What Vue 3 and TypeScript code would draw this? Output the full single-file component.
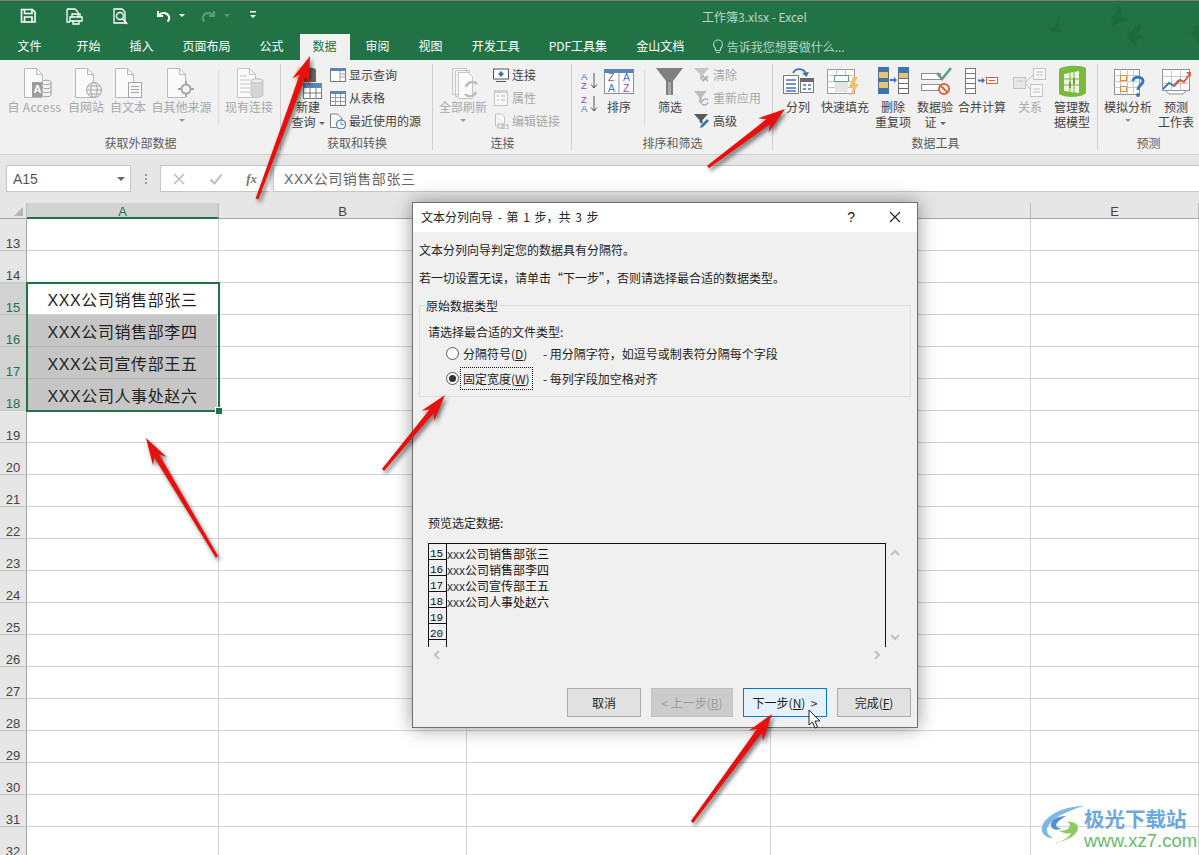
<script setup lang="ts">
const tabs = ['文件', '开始', '插入', '页面布局', '公式', '数据', '审阅', '视图', '开发工具', 'PDF工具集', '金山文档']
const cols = ['A', 'B', 'C', 'D', 'E']
const rows = Array.from({ length: 20 }, (_, i) => i + 13)
const cellText: Record<number, string> = {
  15: 'XXX公司销售部张三',
  16: 'XXX公司销售部李四',
  17: 'XXX公司宣传部王五',
  18: 'XXX公司人事处赵六',
}
const preview = [
  { n: 15, t: '公司销售部张三' },
  { n: 16, t: '公司销售部李四' },
  { n: 17, t: '公司宣传部王五' },
  { n: 18, t: '公司人事处赵六' },
  { n: 19, t: '' },
  { n: 20, t: '' },
]
function arrow(x1: number, y1: number, x2: number, y2: number, w = 1): string {
  const dx = x2 - x1
  const dy = y2 - y1
  const len = Math.hypot(dx, dy)
  const ux = dx / len
  const uy = dy / len
  const nx = -uy
  const ny = ux
  const p = (along: number, off: number) =>
    `${(x1 + ux * along + nx * off * w).toFixed(1)},${(y1 + uy * along + ny * off * w).toFixed(1)}`
  const neck = len - 21
  const barb = len - 27
  return [p(0, -1.4), p(neck, -2.8), p(barb, -8), p(len, 0), p(barb, 8), p(neck, 2.8), p(0, 1.4)].join(' ')
}
const arrows = [
  arrow(257, 199, 310, 56, 1.1),
  arrow(708, 167, 785, 109, 1.1),
  arrow(383, 470, 445, 395),
  arrow(217, 557, 146, 438),
  arrow(692, 822, 772, 714, 1.1),
]
</script>

<template>
  <div class="app">
    <header class="top">
      <div class="title-row">
        <svg class="qat" width="270" height="31" viewBox="0 1 270 31">
          <g fill="none" stroke="#fff" stroke-width="1.6">
            <path d="M21.500 9.500h11l2.500 2.500v10h-13.500z" />
            <path d="M24.500 9.500v4h7.500v-4M24.500 22v-5h7.500v5" />
            <path d="M67 9h8l3 3v5M67 9v13h3" stroke-width="1.300" />
            <path d="M72 14h8v3h-8zM70 17h12v4h-12zM73 21h6v3h-6z" stroke-width="1.300" />
            <path d="M114 9h8l3 3v11h-11z" stroke-width="1.300" />
            <circle cx="120" cy="16" r="3.500" stroke-width="1.400" />
            <path d="M123 19l4 5" stroke-width="1.800" />
            <path d="M158 11v5h5M158.500 15.500c3-4 9-3 10.500 1 .6 2-.4 4-1.500 5" stroke-width="2" />
          </g>
          <path d="M179 14h6l-3 3z" fill="#fff" />
          <g fill="none" stroke="#5f9a7a" stroke-width="2">
            <path d="M214 11v5h-5M213.500 15.500c-3-4-9-3-10.500 1-.6 2 .4 4 1.500 5" />
          </g>
          <path d="M224 14h6l-3 3z" fill="#5f9a7a" />
          <path d="M250 11h6v1.500h-6zM250 15h6l-3 3z" fill="#fff" />
        </svg>
        <span class="doc-title">工作簿3.xlsx - Excel</span>
        <svg class="birds" width="159" height="60" viewBox="0 0 477 180">
          <g fill="#1d6a40">
            <path d="M58 46L50 60 44 80 24 84 40 95 72 96 58 88 58 70z" />
            <path d="M232 14L246 30 246 52 270 60 240 66 212 84 220 60 207 50 224 46z" />
            <path d="M305 73L285 78 276 96 254 100 268 108 266 122 292 140 286 118 314 115 296 102z" />
            <path d="M477 75L462 78 460 96 446 100 460 104 477 138z" />
          </g>
        </svg>
      </div>
      <nav class="tabs">
        <span
          v-for="tab in tabs"
          :key="tab"
          class="tab"
          :class="{ active: tab === '数据', first: tab === '文件' }"
        >{{ tab }}</span>
        <span class="tell">
          <svg width="12" height="15" viewBox="0 0 12 15" fill="none" stroke="#b5d3c1" stroke-width="1.100">
            <path d="M3.500 9.500c-1-1-2-2-2-4a4.500 4.500 0 0 1 9 0c0 2-1 3-2 4v2h-5zM4 13.500h4" />
          </svg>
          告诉我您想要做什么...
        </span>
      </nav>
    </header>

    <section class="ribbon">
      <div class="group g1">
        <div class="body">
          <div class="tool w55 dis">
            <svg width="36" height="36" viewBox="0 0 36 36">
              <path d="M7.500 4.500h12l6 6v23h-18z" fill="#fafafa" stroke="#b9b9b9" />
              <path d="M19.500 4.500v6h6" fill="none" stroke="#b9b9b9" />
              <rect x="15" y="18" width="10" height="15" fill="#9c9c9c" />
              <text x="16.500" y="29" class="svg-a" fill="#fff">A</text>
              <g fill="#f4f4f4" stroke="#9c9c9c">
                <path d="M25 18.500c0-3 9-3 9 0v12c0 3-9 3-9 0z" />
                <path d="M25 18.500c0 3 9 3 9 0M25 22.500c0 3 9 3 9 0M25 26.500c0 3 9 3 9 0" fill="none" />
              </g>
            </svg>
            <span class="access">自 Access</span>
          </div>
          <div class="tool w36 dis">
            <svg width="36" height="36" viewBox="0 0 36 36">
              <path d="M7.500 4.500h12l6 6v23h-18z" fill="#fafafa" stroke="#b9b9b9" />
              <path d="M19.500 4.500v6h6" fill="none" stroke="#b9b9b9" />
              <g fill="#f4f4f4" stroke="#a5a5a5">
                <circle cx="26" cy="26" r="7.500" />
                <ellipse cx="26" cy="26" rx="3.200" ry="7.500" fill="none" />
                <path d="M18.500 26h15M20 22h12M20 30h12" fill="none" />
              </g>
            </svg>
            <span>自网站</span>
          </div>
          <div class="tool w36 dis">
            <svg width="36" height="36" viewBox="0 0 36 36">
              <path d="M5.500 4.500h12l6 6v23h-18z" fill="#fafafa" stroke="#b9b9b9" />
              <path d="M17.500 4.500v6h6" fill="none" stroke="#b9b9b9" />
              <path d="M18.500 18.500h13v15h-13z" fill="#f8f8f8" stroke="#a5a5a5" />
              <path d="M21 22.500h8M21 25.500h8M21 28.500h8" stroke="#a5a5a5" />
            </svg>
            <span>自文本</span>
          </div>
          <div class="tool w59 dis">
            <svg width="36" height="36" viewBox="0 0 36 36">
              <path d="M3.500 4.500h12l6 6v23h-18z" fill="#fafafa" stroke="#b9b9b9" />
              <path d="M15.500 4.500v6h6" fill="none" stroke="#b9b9b9" />
              <circle cx="22" cy="25" r="4.500" fill="#f4f4f4" stroke="#a5a5a5" stroke-width="2" />
              <path d="M22 17v4M22 29v4M14 25h4M26 25h4" stroke="#a5a5a5" stroke-width="2" />
            </svg>
            <span>自其他来源</span>
            <i class="caret" />
          </div>
          <i class="vsep mx1" />
          <div class="tool w48 dis">
            <svg width="36" height="36" viewBox="0 0 36 36">
              <path d="M6.500 4.500h12l6 6v23h-18z" fill="#fafafa" stroke="#c4c4c4" />
              <path d="M18.500 4.500v6h6" fill="none" stroke="#c4c4c4" />
              <path d="M9 12h7M9 16h10M9 20h10M9 24h10M9 28h10" stroke="#c4c4c4" />
              <path d="M20 17c0-3 12-3 12 0v14c0 3-12 3-12 0z" fill="#d5d5d5" stroke="#c4c4c4" />
              <ellipse cx="26" cy="17" rx="6" ry="2" fill="#ececec" stroke="#c4c4c4" />
            </svg>
            <span>现有连接</span>
          </div>
        </div>
        <div class="glabel">获取外部数据</div>
      </div>

      <div class="group g2">
        <div class="body">
          <div class="tool w36">
            <svg width="36" height="36" viewBox="0 0 36 36">
              <path d="M8 3h7l-4 9h5L3 27l5-13H3z" fill="#f4cf8c" />
              <path d="M14 6c0-3 12-3 12 0v12H14z" fill="#6b6b6b" />
              <rect x="13.500" y="19.500" width="18" height="15" fill="#fff" stroke="#7a7a7a" />
              <rect x="13" y="19" width="19" height="5" fill="#5b86b8" />
              <path d="M13.500 29h18M20 24v10M26 24v10" stroke="#7a7a7a" />
            </svg>
            <span>新建<br>查询<i class="caret inl" /></span>
          </div>
          <div class="list">
            <div class="sm">
              <svg width="16" height="16" viewBox="0 0 16 16">
                <rect x=".5" y="1.500" width="15" height="13" fill="#fff" stroke="#7a7a7a" />
                <rect y="1" width="16" height="3" fill="#5b86b8" />
                <path d="M10 4v10M10.500 7h5M10.500 10h5" stroke="#9a9a9a" />
              </svg>
              <span>显示查询</span>
            </div>
            <div class="sm">
              <svg width="16" height="16" viewBox="0 0 16 16">
                <rect x=".5" y="1.500" width="15" height="14" fill="#fff" stroke="#7a7a7a" />
                <rect y="1" width="16" height="3" fill="#5b86b8" />
                <path d="M.5 7.500h15M.5 11.500h15M5.500 4v11M10.500 4v11" stroke="#9a9a9a" />
              </svg>
              <span>从表格</span>
            </div>
            <div class="sm">
              <svg width="16" height="16" viewBox="0 0 16 16">
                <path d="M.5 1h7l4 4v4M.5 1v13.500h6" fill="#fff" stroke="#7a7a7a" />
                <circle cx="11" cy="11.500" r="4.500" fill="#fff" stroke="#5b86b8" stroke-width="1.300" />
                <path d="M11 8.500v3h2.500" fill="none" stroke="#5b86b8" />
              </svg>
              <span>最近使用的源</span>
            </div>
          </div>
        </div>
        <div class="glabel">获取和转换</div>
      </div>

      <div class="group g3">
        <div class="body">
          <div class="tool w48 dis">
            <svg width="36" height="36" viewBox="0 0 36 36">
              <path d="M7.500 4.500h14v26h-14zM10.500 6.500h14v26h-14z" fill="#f3f3f3" stroke="#c8c8c8" />
              <path d="M13.500 8.500h10l4 4v22h-14z" fill="#fafafa" stroke="#c8c8c8" />
              <path d="M21 23a6.500 6.500 0 0 1 11-3M31 28a6.500 6.500 0 0 1-11 2" fill="none" stroke="#bdbdbd" stroke-width="2.500" />
            </svg>
            <span>全部刷新</span>
            <i class="caret" />
          </div>
          <div class="list">
            <div class="sm">
              <svg width="16" height="16" viewBox="0 0 16 16">
                <rect x=".5" y="2" width="15" height="10" fill="#fff" stroke="#555" />
                <path d="M8 4l3 3-3 3-3-3z" fill="#3c78b5" />
                <path d="M3 14.500h10" stroke="#555" />
              </svg>
              <span>连接</span>
            </div>
            <div class="sm dis">
              <svg width="16" height="16" viewBox="0 0 16 16">
                <rect x="1.500" y=".5" width="13" height="15" fill="#f8f8f8" stroke="#c4c4c4" />
                <rect x="1" y="0" width="14" height="3" fill="#d0d0d0" />
                <path d="M4 6h2M4 10h2M8 6h4M8 10h4" stroke="#b5b5b5" />
              </svg>
              <span>属性</span>
            </div>
            <div class="sm dis">
              <svg width="16" height="16" viewBox="0 0 16 16">
                <path d="M2.500 1h6l3 3v6M2.500 1v12h3" fill="#fafafa" stroke="#c4c4c4" />
                <path d="M5 11h6v4H5zM9 12h6v4H9z" fill="none" stroke="#bdbdbd" stroke-width="1.200" />
              </svg>
              <span>编辑链接</span>
            </div>
          </div>
        </div>
        <div class="glabel">连接</div>
      </div>

      <div class="group g4">
        <div class="body">
          <div class="sort-col">
            <svg width="20" height="20" viewBox="0 0 20 20">
              <text x="1" y="9" class="svg-s" fill="#3c78b5">A</text>
              <text x="1" y="18" class="svg-s" fill="#8a4fa8">Z</text>
              <path d="M14 2v15M11 13.500l3 3.500 3-3.500" fill="none" stroke="#555" />
            </svg>
            <svg width="20" height="20" viewBox="0 0 20 20">
              <text x="1" y="9" class="svg-s" fill="#8a4fa8">Z</text>
              <text x="1" y="18" class="svg-s" fill="#3c78b5">A</text>
              <path d="M14 2v15M11 13.500l3 3.500 3-3.500" fill="none" stroke="#555" />
            </svg>
          </div>
          <div class="tool w30">
            <svg width="36" height="36" viewBox="0 0 36 36">
              <rect x="3.500" y="5.500" width="29" height="24" fill="#fff" stroke="#8f8f8f" />
              <rect x="3" y="5" width="30" height="4" fill="#5b86b8" />
              <path d="M18 9v20" stroke="#8f8f8f" />
              <text x="7" y="17" class="svg-s2" fill="#8a4fa8">Z</text>
              <text x="7" y="28" class="svg-s2" fill="#3c78b5">A</text>
              <text x="22" y="17" class="svg-s2" fill="#3c78b5">A</text>
              <text x="22" y="28" class="svg-s2" fill="#8a4fa8">Z</text>
            </svg>
            <span>排序</span>
          </div>
          <i class="vsep mx4" />
          <div class="tool w30 filter-tool">
            <svg width="36" height="36" viewBox="0 0 36 36">
              <path d="M4 4h27L21 17v14h-7V17z" fill="#7f7f7f" />
              <path d="M16 18h3v13h-3z" fill="#a8a8a8" />
            </svg>
            <span>筛选</span>
          </div>
          <div class="list">
            <div class="sm dis">
              <svg width="16" height="16" viewBox="0 0 16 16">
                <path d="M0 1h15L9.500 7v8L6 12V7z" fill="#c4c4c4" />
                <path d="M9 9l5 5M14 9l-5 5" stroke="#a9a9a9" stroke-width="1.500" />
              </svg>
              <span>清除</span>
            </div>
            <div class="sm dis">
              <svg width="16" height="16" viewBox="0 0 16 16">
                <path d="M0 1h13L8 7v8L5 12V7z" fill="#bdbdbd" />
                <path d="M8 12a3.500 3.500 0 0 1 6-2M14 12a3.500 3.500 0 0 1-6 2" fill="none" stroke="#a9a9a9" stroke-width="1.300" />
              </svg>
              <span>重新应用</span>
            </div>
            <div class="sm">
              <svg width="16" height="16" viewBox="0 0 16 16">
                <path d="M0 1h14L8.500 7v4L5.500 9V7z" fill="#5a5a5a" />
                <path d="M6 15l1-3 6-6 2 2-6 6z" fill="#3c78b5" />
              </svg>
              <span>高级</span>
            </div>
          </div>
        </div>
        <div class="glabel">排序和筛选</div>
      </div>

      <div class="group g5">
        <div class="body">
          <div class="tool w30 split">
            <svg width="36" height="36" viewBox="0 0 36 36">
              <path d="M3.500 11.500h15v18h-15z" fill="#fff" stroke="#7a7a7a" />
              <path d="M6 16h10M6 20h10M6 24h10M6 27h10" stroke="#3c78b5" stroke-width="1.300" />
              <rect x="20.500" y="14.500" width="13" height="14" fill="#fff" stroke="#7a7a7a" />
              <rect x="20" y="14" width="14" height="4" fill="#6b6b6b" />
              <path d="M23 21h3M28 21h3M23 25h3M28 25h3" stroke="#3c78b5" stroke-width="1.500" />
              <path d="M13 9a7 7 0 0 1 13 1" fill="none" stroke="#3c78b5" stroke-width="1.800" />
              <path d="M22 9l4.500 4 2.500-5z" fill="#3c78b5" />
            </svg>
            <span>分列</span>
          </div>
          <div class="tool w48 ml2">
            <svg width="36" height="36" viewBox="0 0 36 36">
              <rect x=".5" y="5.500" width="27" height="24" fill="#fff" stroke="#9a9a9a" />
              <path d="M.5 11.500h27M.5 17.500h27M.5 23.500h27M9.500 5.500v24M18.500 5.500v24" stroke="#c8c8c8" />
              <rect x="7.500" y="11.500" width="14" height="6" fill="#fff" stroke="#5e9e7e" />
              <rect x="8" y="18" width="13" height="10" fill="#e4e4e4" />
              <path d="M26 13h5l-4 7h5l-9 13 3-10h-4z" fill="#f3c067" />
            </svg>
            <span>快速填充</span>
          </div>
          <div class="tool w36">
            <svg width="36" height="36" viewBox="0 0 36 36">
              <rect x="3.500" y="3.500" width="10" height="26" fill="#e8c26e" stroke="#6b6b6b" />
              <path d="M3 3h11v5H3zM3 14h11v4H3zM3 24h11v6H3z" fill="#3f74ad" />
              <rect x="23.500" y="3.500" width="10" height="26" fill="#fff" stroke="#6b6b6b" />
              <rect x="23" y="3" width="11" height="6" fill="#3f74ad" />
              <rect x="24" y="9" width="9" height="5" fill="#e8c26e" />
              <path d="M23.500 14.500h10M23.500 19.500h10M23.500 24.500h10" stroke="#6b6b6b" />
              <path d="M15 15h4v-2l3 3-3 3v-2h-4z" fill="#3c78b5" />
            </svg>
            <span>删除<br>重复项</span>
          </div>
          <div class="tool w36">
            <svg width="36" height="36" viewBox="0 0 36 36">
              <rect x="4.500" y="9.500" width="19" height="6" fill="#fff" stroke="#8f8f8f" />
              <rect x="4.500" y="20.500" width="19" height="6" fill="#fff" stroke="#8f8f8f" />
              <path d="M20 9l5 6 9-11" fill="none" stroke="#5e9e7e" stroke-width="2.500" />
              <circle cx="27" cy="25" r="5" fill="#fff" stroke="#d9603f" stroke-width="2" />
              <path d="M23.500 21.500l7 7" stroke="#d9603f" stroke-width="2" />
            </svg>
            <span>数据验<br>证<i class="caret inl" /></span>
          </div>
          <div class="tool w48 mln1">
            <svg width="36" height="36" viewBox="0 0 36 36">
              <rect x="1.500" y="4.500" width="10" height="25" fill="#fff" stroke="#7a7a7a" />
              <path d="M1.500 9.500h10M1.500 14.500h10M1.500 19.500h10M1.500 24.500h10" stroke="#7a7a7a" />
              <path d="M14 15.500h4v-2l3 3-3 3v-2h-4z" fill="#3c78b5" />
              <rect x="22.500" y="13.500" width="11" height="6" fill="#fff" stroke="#d9603f" />
              <path d="M25 16.500h6" stroke="#d9603f" />
            </svg>
            <span>合并计算</span>
          </div>
          <div class="tool w24 ml6 dis">
            <svg width="36" height="36" viewBox="0 0 36 36">
              <rect x="1.500" y="13.500" width="12" height="11" fill="#e8e8e8" stroke="#c4c4c4" />
              <rect x="21.500" y="4.500" width="12" height="11" fill="#f8f8f8" stroke="#c4c4c4" />
              <rect x="18.500" y="20.500" width="12" height="12" fill="#f8f8f8" stroke="#c4c4c4" />
              <path d="M14 18l8-8M14 20l5 6" stroke="#c4c4c4" />
              <path d="M4 17h7M24 8h7M24 11h7M21 25h7M21 28h7" stroke="#c4c4c4" />
            </svg>
            <span>关系</span>
          </div>
          <div class="tool w36 ml6">
            <svg width="36" height="36" viewBox="0 0 36 36">
              <path d="M5 5c6-4 22-4 27-1v25c-5 5-21 5-27 1z" fill="#7ab83e" />
              <path d="M10 10l15-3v22l-15-2z" fill="#fff" opacity=".85" />
              <path d="M10 15h15M10 21h15M16 9v19M20 8v21" stroke="#7ab83e" />
              <path d="M16 18v6M20 14v6" stroke="#4d7a23" stroke-width="1.200" />
            </svg>
            <span>管理数<br>据模型</span>
          </div>
        </div>
        <div class="glabel">数据工具</div>
      </div>

      <div class="group g6">
        <div class="body">
          <div class="tool w48">
            <svg width="36" height="36" viewBox="0 0 36 36">
              <rect x="4.500" y="5.500" width="25" height="25" fill="#fff" stroke="#8f8f8f" />
              <path d="M4.500 11.500h25M4.500 17.500h25M4.500 23.500h25M10.500 5.500v25M17.500 5.500v25M23.500 5.500v25" stroke="#c8c8c8" />
              <rect x="10.500" y="11.500" width="6" height="5" fill="#fff" stroke="#e08a3c" />
              <rect x="10.500" y="22.500" width="6" height="5" fill="#fff" stroke="#e08a3c" />
              <path d="M23 17c0-5 10-5 10 0 0 4-5 4-5 9" fill="none" stroke="#3c78b5" stroke-width="3" />
              <circle cx="28" cy="31" r="2" fill="#3c78b5" />
            </svg>
            <span>模拟分析</span>
            <i class="caret" />
          </div>
          <div class="tool w36">
            <svg width="36" height="36" viewBox="0 0 36 36">
              <rect x="4.500" y="5.500" width="27" height="21" fill="#fff" stroke="#8f8f8f" />
              <path d="M4.500 12.500h27M4.500 19.500h27M13.500 5.500v21M22.500 5.500v21" stroke="#c8c8c8" />
              <path d="M5 25l6-6 5 3 5-6" fill="none" stroke="#3c78b5" stroke-width="2" />
              <path d="M16 22l6-6 4 2 5-7" fill="none" stroke="#d9603f" stroke-width="2" />
              <path d="M28 8h5v5z" fill="#d9603f" />
              <path d="M8 27l3 3h14l3-3" fill="#fff" stroke="#8f8f8f" />
            </svg>
            <span>预测<br>工作表</span>
          </div>
        </div>
        <div class="glabel">预测</div>
      </div>
    </section>

    <section class="formula">
      <div class="namebox">
        <span>A15</span>
        <i class="caret dark" />
      </div>
      <div class="fdots"><i /><i /><i /></div>
      <div class="fbtns">
        <svg width="14" height="14" viewBox="0 0 14 14">
          <path d="M2 2l10 10M12 2L2 12" stroke="#bdbdbd" stroke-width="1.600" />
        </svg>
        <svg width="14" height="14" viewBox="0 0 14 14">
          <path d="M1.500 7.500l4 4 7-9" fill="none" stroke="#bdbdbd" stroke-width="2" />
        </svg>
        <span class="fx">fx</span>
      </div>
      <div class="finput">XXX公司销售部张三</div>
    </section>

    <section class="sheet">
      <div class="corner"><i /></div>
      <div v-for="c in cols" :key="c" class="chead" :class="{ sel: c === 'A' }">{{ c }}</div>
      <template v-for="r in rows" :key="r">
        <div class="rhead" :class="{ sel: r >= 15 && r <= 18 }">{{ r }}</div>
        <div class="cell a">
          <div
            v-if="cellText[r]"
            class="cell-in"
            :class="{ shade: r > 15 }"
          >{{ cellText[r] }}</div>
        </div>
        <div class="cell" />
        <div class="cell" />
        <div class="cell" />
        <div class="cell" />
      </template>
      <div class="selection"><i /></div>
    </section>

    <div class="dialog">
      <div class="dlg-title">
        <span>文本分列向导 - 第 1 步，共 3 步</span>
        <span class="q">?</span>
        <svg width="12" height="12" viewBox="0 0 12 12">
          <path d="M1 1l10 10M11 1L1 11" stroke="#222" stroke-width="1.100" />
        </svg>
      </div>
      <div class="dlg-body">
        <p>文本分列向导判定您的数据具有分隔符。</p>
        <p>若一切设置无误，请单击“下一步”，否则请选择最合适的数据类型。</p>
        <fieldset>
          <legend>原始数据类型</legend>
          <div class="fl">请选择最合适的文件类型:</div>
          <div class="radio-row">
            <i class="radio" />
            <span class="rlabel"><span>分隔符号(<u>D</u>)</span></span>
            <span>- 用分隔字符，如逗号或制表符分隔每个字段</span>
          </div>
          <div class="radio-row">
            <i class="radio on" />
            <span class="rlabel"><span class="focus">固定宽度(<u>W</u>)</span></span>
            <span>- 每列字段加空格对齐</span>
          </div>
        </fieldset>
        <div class="pv-label">预览选定数据:</div>
        <div class="pv-row">
          <div class="pv">
            <div v-for="p in preview" :key="p.n" class="pv-line">
              <span class="pv-n">{{ p.n }}</span>
              <span class="pv-t"><template v-if="p.t"><b>XXX</b>{{ p.t }}</template></span>
            </div>
            <div class="pv-line"><span class="pv-n" /></div>
          </div>
          <div class="vscroll">
            <svg width="10" height="7" viewBox="0 0 10 7"><path d="M1 6l4-4 4 4" fill="none" stroke="#c2c2c2" stroke-width="2" /></svg>
            <svg width="10" height="7" viewBox="0 0 10 7"><path d="M1 1l4 4 4-4" fill="none" stroke="#c2c2c2" stroke-width="2" /></svg>
          </div>
        </div>
        <div class="hscroll">
          <svg width="7" height="10" viewBox="0 0 7 10"><path d="M6 1L2 5l4 4" fill="none" stroke="#c2c2c2" stroke-width="2" /></svg>
          <svg width="7" height="10" viewBox="0 0 7 10"><path d="M1 1l4 4-4 4" fill="none" stroke="#c2c2c2" stroke-width="2" /></svg>
        </div>
        <div class="btns">
          <button class="b74">取消</button>
          <button class="b82 off">&lt; 上一步(<u>B</u>)</button>
          <button class="b84 primary">下一步(<u>N</u>) &nbsp;&gt;</button>
          <button class="b74">完成(<u>F</u>)</button>
        </div>
      </div>
    </div>

    <svg class="arrows" width="1199" height="855" viewBox="0 0 1199 855">
      <polygon v-for="(p, i) in arrows" :key="i" :points="p" fill="#e8100f" />
    </svg>

    <svg class="pointer" width="14" height="21" viewBox="0 0 14 21">
      <path d="M1 1v15l3.500-3 2.500 6 2.500-1-2.500-6h5z" fill="#fff" stroke="#222" />
    </svg>

    <div class="mark">
      <svg width="46" height="42" viewBox="0 0 46 42">
        <path d="M44 2C28 2 10 8 3 20c-4 8 2 14 10 14-6-3-8-8-4-13C15 12 30 6 44 2z" fill="#7fb7e6" />
        <path d="M26 12c-8 0-16 4-15 10 1 4 7 5 10 2-4 0-6-2-4-5 2-3 6-5 9-7z" fill="#4f8fd0" />
        <path d="M18 26c6 2 12-1 12-5 0-2-2-3-4-3 6-1 12 1 12 6 0 8-14 14-28 16 14-2 20-8 21-11-3 1-9 0-13-3z" fill="#8ccb5f" />
      </svg>
      <div class="mark-t">
        <span class="cn">极光下载站</span>
        <span class="en">www.xz7.com</span>
      </div>
    </div>
  </div>
</template>

<style>
html, body { margin: 0; padding: 0; overflow: hidden; }
</style>

<style scoped>
* { box-sizing: border-box; }
.app {
  position: relative;
  width: 1199px;
  height: 855px;
  overflow: hidden;
  background: #fff;
  font-family: "Noto Sans CJK SC", "Liberation Sans", sans-serif;
  font-size: 12px;
  color: #444;
}
.top { position: relative; height: 60px; background: #217346; border-top: 1px solid #7b7b7b; }
.title-row { display: flex; height: 33px; padding-bottom: 2px; align-items: center; }
.qat { display: block; flex: none; }
.doc-title { margin-left: 432px; color: #bcd6c7; }
.birds { position: absolute; right: 0; top: -1px; }
.tabs { display: flex; height: 26px; padding-left: 3px; align-items: center; }
.tab { height: 26px; line-height: 24px; padding: 0 14.5px; color: #fff; white-space: nowrap; }
.tab.first { padding-right: 20.5px; }
.tab.active { background: #f1f1f1; color: #217346; margin: 0 1.5px; padding: 0 13px; }
.tell { display: flex; align-items: center; gap: 3px; margin-left: 13px; margin-bottom: 2px; color: #b5d3c1; white-space: nowrap; }

.ribbon {
  display: flex;
  height: 95px;
  background: #f1f1f1;
  border-bottom: 1px solid #d2d2d2;
}
.group { position: relative; display: flex; flex-direction: column; padding-top: 4px; }
.group::after {
  content: "";
  position: absolute;
  right: 0;
  top: 4px;
  height: 86px;
  width: 1px;
  background: #d0d0d0;
}
.g1 { width: 281px; }
.g2 { width: 152px; }
.g3 { width: 139px; }
.g4 { width: 201px; }
.g5 { width: 325px; }
.g6 { width: 101px; }
.g6::after { display: none; }
.body { display: flex; gap: 6px; height: 68px; }
.g1 .body { padding-left: 7px; }
.g2 .body { padding-left: 9px; gap: 4px; }
.g3 .body { padding-left: 6px; }
.g4 .body { padding-left: 8px; gap: 4px; }
.g5 .body { padding-left: 10px; }
.g6 .body { padding-left: 6px; }
.glabel { height: 22px; line-height: 22px; text-align: center; color: #5c5c5c; }
.tool {
  display: flex;
  flex-direction: column;
  align-items: center;
  flex: none;
  line-height: 15px;
  text-align: center;
  white-space: nowrap;
}
.tool svg { flex: none; display: block; margin-bottom: -1px; }
.tool.dis, .sm.dis { color: #a9a9a9; }
.access { letter-spacing: .3px; }
.w24 { width: 24px; }
.w30 { width: 30px; }
.w36 { width: 36px; }
.w48 { width: 48px; }
.w55 { width: 55px; }
.w59 { width: 59px; }
.ml2 { margin-left: 2px; }
.ml6 { margin-left: 6px; }
.mln1 { margin-left: -1px; }
.filter-tool { margin-left: 6px; margin-right: 5px; }
.caret {
  display: block;
  width: 0;
  height: 0;
  margin-top: 5px;
  border-left: 3px solid transparent;
  border-right: 3px solid transparent;
  border-top: 3px solid #9a9a9a;
}
.caret.inl { display: inline-block; margin: 0 0 2px 3px; border-top-color: #666; }
.caret.dark { margin: 0; border-left-width: 4px; border-right-width: 4px; border-top: 4px solid #666; }
.vsep { display: block; flex: none; width: 1px; height: 54px; margin-top: 6px; background: #d8d8d8; }
.mx1 { margin-left: 1px; }
.mx4 { margin-left: 6px; }
.list { display: flex; flex-direction: column; flex: none; margin-top: -1px; }
.sm { display: flex; align-items: center; gap: 3px; height: 23px; white-space: nowrap; }
.sm svg { flex: none; }
.sort-col { display: flex; flex-direction: column; gap: 3px; width: 20px; padding-top: 7px; flex: none; }
.sort-col svg { display: block; }
.svg-a { font: bold 11px "Liberation Sans", sans-serif; }
.svg-s { font: 9.500px "Liberation Sans", sans-serif; }
.svg-s2 { font: 10.500px "Liberation Sans", sans-serif; }

.formula {
  display: flex;
  height: 48px;
  background: #e6e6e6;
  padding: 10px 0 11px 6px;
  align-items: stretch;
}
.namebox {
  width: 125px;
  display: flex;
  align-items: center;
  justify-content: space-between;
  padding: 0 5px 0 6px;
  background: #fff;
  border: 1px solid #c6c6c6;
  font: 14px "Liberation Sans", sans-serif;
  color: #555;
}
.fdots { width: 29px; display: flex; flex-direction: column; align-items: center; justify-content: center; gap: 2px; }
.fdots i { width: 2px; height: 2px; background: #9a9a9a; }
.fbtns {
  width: 110px;
  display: flex;
  align-items: center;
  justify-content: space-between;
  padding: 0 13px 0 11px;
  background: #fff;
  border: 1px solid #c6c6c6;
  border-right: 0;
}
.fx { font: italic bold 13px "Liberation Serif", serif; color: #777; }
.finput {
  flex: 1;
  margin-left: 3px;
  padding-left: 10px;
  background: #fff;
  border: 1px solid #c6c6c6;
  border-right: 0;
  font: 14px/26px "Liberation Sans", "Noto Sans CJK SC", sans-serif;
  letter-spacing: .55px;
  color: #666;
}

.sheet {
  position: relative;
  display: grid;
  grid-template-columns: 27px 192px 248px 304px 260px 168px;
  grid-template-rows: 16px;
  grid-auto-rows: 32px;
}
.corner { position: relative; background: #e6e6e6; border-bottom: 1px solid #a5a5a5; border-right: 1px solid #bbb; }
.corner i {
  position: absolute;
  right: 3px;
  bottom: 2px;
  width: 0;
  height: 0;
  border-left: 9px solid transparent;
  border-bottom: 9px solid #b5b5b5;
}
.chead {
  background: #e6e6e6;
  border-right: 1px solid #bbb;
  border-bottom: 1px solid #a5a5a5;
  text-align: center;
  font: 13px/18px "Liberation Sans", sans-serif;
  color: #444;
}
.chead.sel { background: #d2d2d2; color: #217346; border-bottom: 2px solid #217346; }
.rhead {
  display: flex;
  align-items: flex-end;
  justify-content: center;
  background: #e6e6e6;
  border-right: 1px solid #a5a5a5;
  border-bottom: 1px solid #c6c6c6;
  font: 13px/12px "Liberation Sans", sans-serif;
  color: #444;
}
.rhead.sel { background: #d2d2d2; color: #217346; }
.cell { border-right: 1px solid #d4d4d4; border-bottom: 1px solid #d4d4d4; background: #fff; }
.cell.a { padding: 0 1px; }
.cell-in {
  height: 31px;
  text-align: center;
  font: 16px/35px "Liberation Sans", "Noto Sans CJK SC", sans-serif;
  letter-spacing: .6px;
  color: #222;
}
.cell-in.shade { background: #c6c6c6; border-bottom: 1px solid #b2b2b2; height: 32px; }
.selection {
  position: absolute;
  left: 26px;
  top: 79px;
  width: 194px;
  height: 130px;
  border: 2px solid #217346;
  pointer-events: none;
}
.selection i {
  position: absolute;
  right: -4px;
  bottom: -4px;
  width: 7px;
  height: 7px;
  background: #217346;
  border: 1px solid #fff;
  border-right: 0;
  border-bottom: 0;
}

.dialog {
  position: absolute;
  left: 412px;
  top: 202px;
  width: 506px;
  height: 526px;
  background: #f0f0f0;
  border: 1px solid #6f6f6f;
  box-shadow: 0 0 18px rgba(0, 0, 0, .4);
  color: #1e1e1e;
}
.dlg-title {
  display: flex;
  align-items: center;
  height: 29px;
  padding: 0 16px 2px 8px;
  background: #fff;
  color: #222;
}
.dlg-title span:first-child { flex: 1; word-spacing: 2px; }
.dlg-title .q { margin-right: 34px; font: 14px "Liberation Sans", sans-serif; }
.dlg-body { padding: 8px 6px 0; }
.dlg-body p { margin: 0 0 8px; line-height: 20px; }
fieldset {
  height: 99px;
  margin: 10px 0 0;
  padding: 0 8px;
  border: 1px solid #dcdcdc;
  min-width: 0;
}
legend { margin-left: -3px; padding: 0 1px; line-height: 15px; font-size: 12px; }
.fl { line-height: 19px; margin-top: 9px; }
.radio-row { display: flex; align-items: center; height: 25px; margin-left: 18px; }
.radio {
  position: relative;
  flex: none;
  width: 13px;
  height: 13px;
  margin-right: 4px;
  background: #fff;
  border: 1px solid #555;
  border-radius: 50%;
}
.radio.on::after {
  content: "";
  position: absolute;
  left: 2px;
  top: 2px;
  width: 7px;
  height: 7px;
  border-radius: 50%;
  background: #333;
}
.rlabel { flex: none; width: 80px; }
.focus { outline: 1px dotted #111; outline-offset: 2px; }
.pv-label { margin: 116px 0 0 9px; line-height: 20px; }
.pv-row { display: flex; margin: 10px 0 0 9px; height: 104px; }
.pv {
  width: 458px;
  height: 104px;
  overflow: hidden;
  border: 1px solid #111;
  border-bottom: 0;
  background: #f0f0f0;
  flex: none;
}
.pv-line { display: flex; height: 16px; color: #111; }
.pv-n {
  flex: none;
  width: 18px;
  height: 16px;
  border-right: 1px solid #111;
  border-bottom: 1px solid #111;
  padding-left: 1px;
  font: 11px/20px "Liberation Mono", monospace;
}
.pv-t { line-height: 19px; white-space: nowrap; }
.pv-t b { font: 10px "Liberation Mono", monospace; }
.vscroll {
  width: 17px;
  height: 104px;
  display: flex;
  flex-direction: column;
  align-items: center;
  justify-content: space-between;
  padding: 6px 0;
}
.vscroll svg, .hscroll svg { display: block; }
.hscroll {
  display: flex;
  align-items: center;
  justify-content: space-between;
  width: 458px;
  height: 16px;
  margin-left: 9px;
  padding: 0 5px;
}
.btns { display: flex; justify-content: flex-end; gap: 10px; margin-top: 25px; }
button {
  height: 29px;
  padding: 0;
  background: #e1e1e1;
  border: 1px solid #adadad;
  font: 12px "Noto Sans CJK SC", sans-serif;
  color: #1e1e1e;
}
.b74 { width: 74px; }
.b82 { width: 82px; }
.b84 { width: 84px; }
button.off { background: #cccccc; color: #9c9c9c; border-color: #bfbfbf; }
button.primary { background: #e5f1fb; border-color: #0078d7; }

.arrows { position: absolute; left: 0; top: 0; pointer-events: none; }
.arrows polygon { filter: drop-shadow(2px 3px 2px rgba(0, 0, 0, .55)); }
.pointer { position: absolute; left: 808px; top: 709px; }
.mark { position: absolute; left: 1040px; top: 804px; display: flex; gap: 0; align-items: flex-start; }
.mark-t { display: flex; flex-direction: column; margin-left: -2px; }
.cn { font: bold 20.500px/28px "Noto Sans CJK SC", sans-serif; color: #6fa8dc; white-space: nowrap; }
.en { font: 18.500px/18px "Liberation Sans", sans-serif; color: #66bb6a; white-space: nowrap; }
</style>
